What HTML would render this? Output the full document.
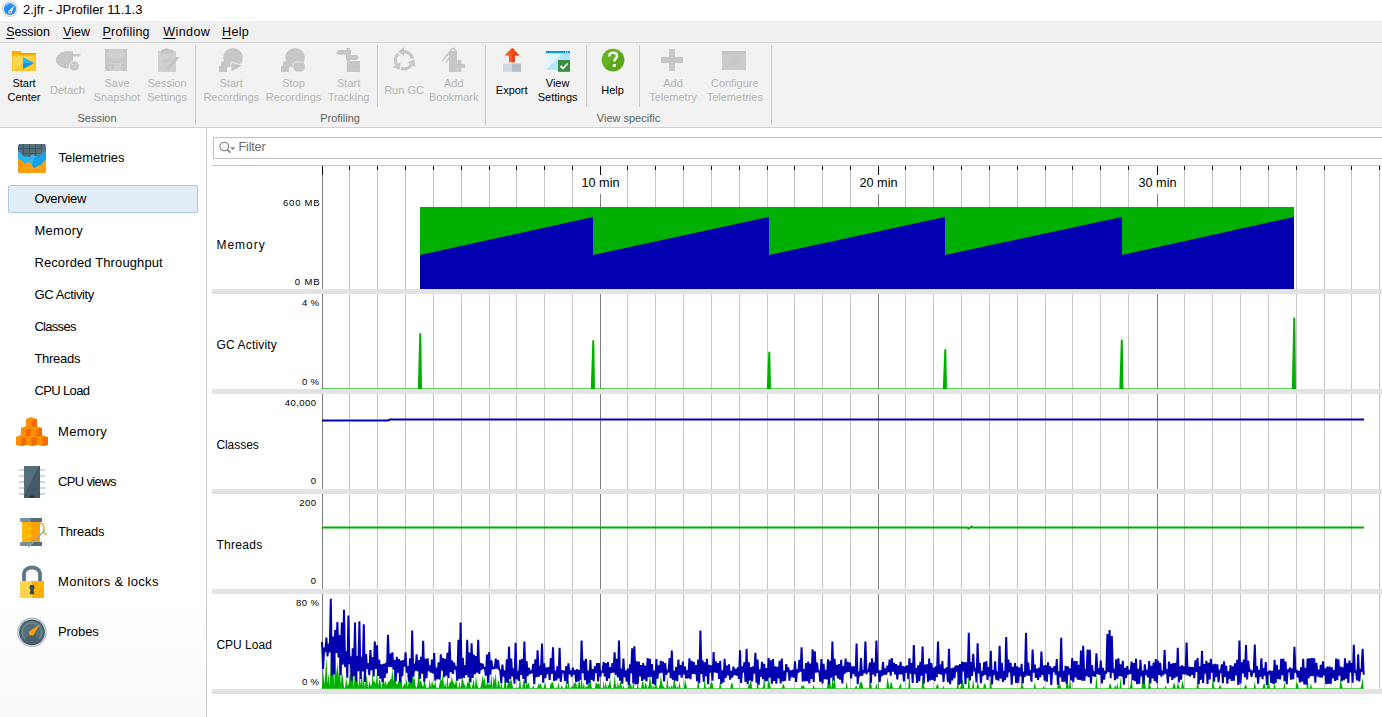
<!DOCTYPE html>
<html><head><meta charset="utf-8"><style>
html,body{margin:0;padding:0;}
body{width:1382px;height:717px;position:relative;overflow:hidden;background:#fff;font-family:"Liberation Sans", sans-serif;}
.t{position:absolute;white-space:nowrap;line-height:1;}
svg{display:block}
</style></head><body>
<div style="position:absolute;left:0;top:0;width:1382px;height:21px;background:#fff"></div>
<svg style="position:absolute;left:0;top:0" width="20" height="18" viewBox="0 0 20 18">
<circle cx="9.9" cy="9" r="7.6" fill="#f4f4f4" stroke="#d6d6d6" stroke-width="1.2"/>
<circle cx="9.9" cy="9" r="6.1" fill="#1e8cf5"/>
<path d="M5.5 7 A5 5 0 0 1 13 4.6" stroke="#6fb8ff" stroke-width="1" fill="none"/>
<path d="M14.4 5.2 L11.4 12.6 L8.4 11.4 Z" fill="#fff"/>
<circle cx="9.9" cy="11.9" r="1.7" fill="#fff"/>
<rect x="9.2" y="11" width="1.6" height="1.6" fill="#f4511e"/>
</svg>
<div class="t" style="left:23.00px;top:3.00px;font-size:13px;color:#000;letter-spacing:-0.013px;">2.jfr - JProfiler 11.1.3</div>
<div style="position:absolute;left:0;top:21px;width:1382px;height:21px;background:#f0f0f0"></div>
<div style="position:absolute;left:0;top:42px;width:1382px;height:1px;background:#d5d5d5"></div>
<div class="t" style="left:6.20px;top:26.42px;font-size:12.5px;color:#000;letter-spacing:-0.133px;text-underline-offset:1.5px"><u>S</u>ession</div>
<div class="t" style="left:63.00px;top:26.42px;font-size:12.5px;color:#000;letter-spacing:0.033px;text-underline-offset:1.5px"><u>V</u>iew</div>
<div class="t" style="left:102.50px;top:26.42px;font-size:12.5px;color:#000;letter-spacing:0.237px;text-underline-offset:1.5px"><u>P</u>rofiling</div>
<div class="t" style="left:163.30px;top:26.42px;font-size:12.5px;color:#000;letter-spacing:0.400px;text-underline-offset:1.5px"><u>W</u>indow</div>
<div class="t" style="left:222.00px;top:26.42px;font-size:12.5px;color:#000;letter-spacing:0.333px;text-underline-offset:1.5px"><u>H</u>elp</div>
<div style="position:absolute;left:0;top:43px;width:1382px;height:84px;background:#f2f2f2"></div>
<div style="position:absolute;left:0;top:127px;width:1382px;height:1px;background:#d0d0d0"></div>
<div style="position:absolute;left:195px;top:45px;width:1px;height:80px;background:#c8c8c8"></div>
<div style="position:absolute;left:485px;top:45px;width:1px;height:80px;background:#c8c8c8"></div>
<div style="position:absolute;left:771px;top:45px;width:1px;height:80px;background:#c8c8c8"></div>
<div style="position:absolute;left:377px;top:45px;width:1px;height:62px;background:#c8c8c8"></div>
<div style="position:absolute;left:586px;top:45px;width:1px;height:62px;background:#c8c8c8"></div>
<div style="position:absolute;left:639px;top:45px;width:1px;height:62px;background:#c8c8c8"></div>
<div class="t" style="left:77.45px;top:112.69px;font-size:11px;color:#606060;letter-spacing:0.000px;">Session</div>
<div class="t" style="left:320.15px;top:112.69px;font-size:11px;color:#606060;letter-spacing:0.000px;">Profiling</div>
<div class="t" style="left:596.80px;top:112.69px;font-size:11px;color:#606060;letter-spacing:0.000px;">View specific</div>
<div class="t" style="left:12.40px;top:77.69px;font-size:11px;color:#000;letter-spacing:0.000px;">Start</div>
<div class="t" style="left:7.50px;top:91.69px;font-size:11px;color:#000;letter-spacing:0.000px;">Center</div>
<div class="t" style="left:50.05px;top:84.69px;font-size:11px;color:#b4b4b4;letter-spacing:0.000px;">Detach</div>
<div class="t" style="left:104.45px;top:77.69px;font-size:11px;color:#b4b4b4;letter-spacing:0.000px;">Save</div>
<div class="t" style="left:93.75px;top:91.69px;font-size:11px;color:#b4b4b4;letter-spacing:0.000px;">Snapshot</div>
<div class="t" style="left:147.45px;top:77.69px;font-size:11px;color:#b4b4b4;letter-spacing:0.000px;">Session</div>
<div class="t" style="left:147.15px;top:91.69px;font-size:11px;color:#b4b4b4;letter-spacing:0.000px;">Settings</div>
<div class="t" style="left:219.60px;top:77.69px;font-size:11px;color:#b4b4b4;letter-spacing:0.000px;">Start</div>
<div class="t" style="left:203.40px;top:91.69px;font-size:11px;color:#b4b4b4;letter-spacing:0.000px;">Recordings</div>
<div class="t" style="left:282.20px;top:77.69px;font-size:11px;color:#b4b4b4;letter-spacing:0.000px;">Stop</div>
<div class="t" style="left:265.70px;top:91.69px;font-size:11px;color:#b4b4b4;letter-spacing:0.000px;">Recordings</div>
<div class="t" style="left:337.00px;top:77.69px;font-size:11px;color:#b4b4b4;letter-spacing:0.000px;">Start</div>
<div class="t" style="left:327.70px;top:91.69px;font-size:11px;color:#b4b4b4;letter-spacing:0.000px;">Tracking</div>
<div class="t" style="left:384.15px;top:84.69px;font-size:11px;color:#b4b4b4;letter-spacing:0.000px;">Run GC</div>
<div class="t" style="left:444.00px;top:77.69px;font-size:11px;color:#b4b4b4;letter-spacing:0.000px;">Add</div>
<div class="t" style="left:429.00px;top:91.69px;font-size:11px;color:#b4b4b4;letter-spacing:0.000px;">Bookmark</div>
<div class="t" style="left:495.80px;top:84.69px;font-size:11px;color:#000;letter-spacing:0.000px;">Export</div>
<div class="t" style="left:545.75px;top:77.69px;font-size:11px;color:#000;letter-spacing:0.000px;">View</div>
<div class="t" style="left:537.75px;top:91.69px;font-size:11px;color:#000;letter-spacing:0.000px;">Settings</div>
<div class="t" style="left:601.30px;top:84.69px;font-size:11px;color:#000;letter-spacing:0.000px;">Help</div>
<div class="t" style="left:663.20px;top:77.69px;font-size:11px;color:#b4b4b4;letter-spacing:0.000px;">Add</div>
<div class="t" style="left:649.15px;top:91.69px;font-size:11px;color:#b4b4b4;letter-spacing:0.000px;">Telemetry</div>
<div class="t" style="left:710.95px;top:77.69px;font-size:11px;color:#b4b4b4;letter-spacing:0.000px;">Configure</div>
<div class="t" style="left:706.70px;top:91.69px;font-size:11px;color:#b4b4b4;letter-spacing:0.000px;">Telemetries</div>
<svg style="position:absolute;left:0;top:43px" width="780" height="32" viewBox="0 43 780 32">
<!-- start center folder -->
<path d="M12 51 H20.5 L22 53 H36 V71 H12 Z" fill="#f0a800"/>
<rect x="12.5" y="51.5" width="8" height="4" fill="#ffb300"/>
<rect x="12.5" y="55.5" width="23" height="15" fill="#ffd54f"/>
<path d="M12.5 70.5 L35.5 55.5 V70.5 Z" fill="#ffca28"/>
<path d="M23 57 L34 63 L23 69 Z" fill="#29b6f6"/>
<path d="M23 63 L34 63 L23 69 Z" fill="#0897e0"/>
<!-- detach plug -->
<path d="M56 58 L57.5 55.5 L61 52.5 L66.5 51 L73 51.5 V54 H79.5 Q80.5 54 80.5 55.2 Q80.5 56.5 79.5 56.5 H73 V62 L70 67 L66.5 68.7 L61 67 L57.5 64 L56 62 Z" fill="#c6c6c6"/>
<rect x="66" y="51" width="0.8" height="18" fill="#cbcbcb"/>
<circle cx="74.3" cy="66" r="5" fill="#c6c6c6" stroke="#f2f2f2" stroke-width="0.8"/>
<path d="M72 63.7 L76.6 68.3 M76.6 63.7 L72 68.3" stroke="#d2d2d2" stroke-width="1.5"/>
<!-- floppy -->
<path d="M105 49 H127 V71 H106 L105 70 Z" fill="#c6c6c6"/>
<rect x="108" y="49.5" width="16" height="8.5" fill="#cfcfcf"/>
<rect x="108" y="58" width="16" height="3.5" fill="#cacaca"/>
<rect x="110" y="63" width="12" height="8" fill="#d0d0d0"/>
<rect x="111.3" y="64.3" width="2.2" height="5" fill="#c2c2c2"/>
<!-- clipboard -->
<rect x="158" y="51" width="18" height="21" fill="#cfcfcf"/>
<path d="M161 53.5 V50 L164 49 Q166.5 47.5 169 49 L173 50 V53.5 Z" fill="#c4c4c4"/>
<path d="M163 59.5 L166 62.5 L170 58" stroke="#c6c6c6" stroke-width="1.5" fill="none"/>
<path d="M165.5 68.5 L176.5 57 L179.5 57.5 L168 70 Z" fill="#c4c4c4"/>
<!-- start recordings -->
<circle cx="233" cy="57.7" r="9.8" fill="#c6c6c6"/>
<path d="M233.0 57.7 L233.0 49.2 M233.0 57.7 L224.9 55.1 M233.0 57.7 L228.0 64.6 M233.0 57.7 L238.0 64.6 M233.0 57.7 L241.1 55.1" stroke="#cbcbcb" stroke-width="0.8"/>
<rect x="221" y="61.5" width="7" height="6" fill="#c6c6c6"/>
<rect x="219" y="66" width="8" height="6" fill="#c6c6c6"/>
<path d="M231 62 L243 65.5 L231 72 Z" fill="#c6c6c6" stroke="#f2f2f2" stroke-width="0.8"/>
<!-- stop recordings -->
<circle cx="295" cy="57.7" r="9.8" fill="#c6c6c6"/>
<path d="M295.0 57.7 L295.0 49.2 M295.0 57.7 L286.9 55.1 M295.0 57.7 L290.0 64.6 M295.0 57.7 L300.0 64.6 M295.0 57.7 L303.1 55.1" stroke="#cbcbcb" stroke-width="0.8"/>
<rect x="283" y="61.5" width="7" height="6" fill="#c6c6c6"/>
<rect x="281" y="66" width="8" height="6" fill="#c6c6c6"/>
<path d="M295 62 H303 L305 64 V69 L302 72 H296 L293 69 V64 Z" fill="#c6c6c6" stroke="#f2f2f2" stroke-width="0.8"/>
<path d="M295.5 66.5 H303.5" stroke="#d0d0d0" stroke-width="1.2" stroke-dasharray="1.2 0.6"/>
<!-- start tracking -->
<rect x="346.8" y="48" width="3.2" height="24" fill="#c6c6c6"/>
<path d="M336 52.4 L338.4 50 H351 V54.8 H338.4 Z" fill="#c6c6c6"/>
<path d="M346 55 H356.6 L359 57.4 L356.6 59.9 H346 Z" fill="#c6c6c6"/>
<rect x="347" y="61" width="13" height="11" fill="#c6c6c6"/>
<circle cx="354.3" cy="66.5" r="3.3" fill="none" stroke="#cdcdcd" stroke-width="1"/>
<!-- run gc -->
<path d="M412.47 58.81 A8.6 8.6 0 0 0 404.00 51.70" fill="none" stroke="#c6c6c6" stroke-width="3.4"/>
<path d="M404.00 47.10 L398.00 51.70 L404.00 56.30 Z" fill="#c6c6c6"/>
<path d="M398.47 53.71 A8.6 8.6 0 0 0 396.55 64.60" fill="none" stroke="#c6c6c6" stroke-width="3.4"/>
<path d="M392.57 66.90 L399.55 69.80 L400.54 62.30 Z" fill="#c6c6c6"/>
<path d="M401.06 68.38 A8.6 8.6 0 0 0 411.45 64.60" fill="none" stroke="#c6c6c6" stroke-width="3.4"/>
<path d="M415.43 66.90 L414.45 59.40 L407.46 62.30 Z" fill="#c6c6c6"/>
<!-- add bookmark -->
<rect x="449" y="51" width="8" height="21" fill="#c6c6c6"/>
<path d="M450 57 C450 51 451 48.5 453 48.5 H454.5 L456 51" fill="none" stroke="#c6c6c6" stroke-width="1.5"/>
<path d="M450.5 52 C447 54 445 58 442 61.5" fill="none" stroke="#c6c6c6" stroke-width="1.5"/>
<path d="M451.5 54 C450 57 447 60 446 63" fill="none" stroke="#c6c6c6" stroke-width="1.4"/>
<rect x="457.5" y="60" width="3.8" height="12" fill="#c6c6c6"/>
<rect x="453" y="64" width="12" height="3.8" fill="#c6c6c6"/>

<!-- export -->
<path d="M512 47.8 L519.5 55.5 H515 V62.2 H509 V55.5 H504.5 Z" fill="#ff5722"/>
<path d="M512 47.8 L519.5 55.5 H515 V62.2 H512 Z" fill="#e64a19"/>
<rect x="503" y="63.5" width="9" height="8.3" fill="#cfd8dc"/>
<rect x="512" y="63.5" width="9" height="8.3" fill="#b0bec5"/>
<!-- view settings -->
<rect x="546" y="51" width="24" height="19" fill="#e1f5fe"/>
<path d="M546 70 L563 53 H570 V70 Z" fill="#b3e5fc"/>
<rect x="546" y="51" width="24" height="2.2" fill="#039be5"/>
<rect x="565" y="51.6" width="1" height="1" fill="#fff"/><rect x="567" y="51.6" width="1" height="1" fill="#fff"/>
<rect x="558" y="60" width="12" height="11.8" fill="#388e3c"/>
<path d="M560.5 66 L563 68.5 L567.5 63.5" stroke="#fff" stroke-width="1.8" fill="none"/>
<!-- help -->
<circle cx="613" cy="60.1" r="11.3" fill="#64b320"/>
<path d="M605 68 A11.3 11.3 0 0 0 621 52 Z" fill="#4f9a14" opacity="0.5"/>
<path d="M609.3 56.5 C609.3 53.8 611 52.6 613.2 52.6 C615.5 52.6 617 54 617 56 C617 58.5 614.3 58.7 614.3 61.5" stroke="#fff" stroke-width="2.4" fill="none"/>
<rect x="612.8" y="64" width="3" height="3" fill="#fff"/>
<!-- add telemetry -->
<rect x="669" y="49" width="6" height="22" fill="#c6c6c6"/>
<rect x="661" y="57" width="22" height="6" fill="#c6c6c6"/>
<!-- configure telemetries -->
<rect x="722" y="51" width="24" height="19" fill="#cccccc"/>
<rect x="722" y="51" width="24" height="3" fill="#c4c4c4"/>
<circle cx="734" cy="61" r="4.5" fill="#c8c8c8"/>
</svg>
<div style="position:absolute;left:0;top:128px;width:206px;height:589px;background:linear-gradient(to bottom,#fff 0,#fff 470px,#f9f9f9 589px)"></div>
<div style="position:absolute;left:206px;top:128px;width:1px;height:589px;background:#c8c8c8"></div>
<div style="position:absolute;left:207px;top:128px;width:1175px;height:589px;background:#fff"></div>
<div class="t" style="left:58.60px;top:151.20px;font-size:13px;color:#000;letter-spacing:-0.060px;">Telemetries</div>
<div style="position:absolute;left:8px;top:185px;width:188px;height:26px;background:#e2ecf6;border:1px solid #a9c9e6;border-radius:2px"></div>
<div class="t" style="left:34.40px;top:192.00px;font-size:13px;color:#000;letter-spacing:-0.329px;">Overview</div>
<div class="t" style="left:34.40px;top:224.00px;font-size:13px;color:#000;letter-spacing:0.300px;">Memory</div>
<div class="t" style="left:34.40px;top:256.00px;font-size:13px;color:#000;letter-spacing:0.117px;">Recorded Throughput</div>
<div class="t" style="left:34.40px;top:288.00px;font-size:13px;color:#000;letter-spacing:-0.360px;">GC Activity</div>
<div class="t" style="left:34.40px;top:320.00px;font-size:13px;color:#000;letter-spacing:-0.700px;">Classes</div>
<div class="t" style="left:34.40px;top:352.00px;font-size:13px;color:#000;letter-spacing:-0.283px;">Threads</div>
<div class="t" style="left:34.40px;top:384.00px;font-size:13px;color:#000;letter-spacing:-0.629px;">CPU Load</div>
<div class="t" style="left:58.00px;top:425.00px;font-size:13px;color:#000;letter-spacing:0.380px;">Memory</div>
<div class="t" style="left:58.00px;top:475.00px;font-size:13px;color:#000;letter-spacing:-0.638px;">CPU views</div>
<div class="t" style="left:58.00px;top:525.00px;font-size:13px;color:#000;letter-spacing:-0.183px;">Threads</div>
<div class="t" style="left:58.00px;top:575.00px;font-size:13px;color:#000;letter-spacing:0.340px;">Monitors &amp; locks</div>
<div class="t" style="left:58.00px;top:625.00px;font-size:13px;color:#000;letter-spacing:-0.080px;">Probes</div>
<svg style="position:absolute;left:0;top:128px" width="60" height="540" viewBox="0 128 60 540">
<!-- telemetries -->
<defs><clipPath id="tc"><rect x="18" y="144" width="28" height="29" rx="1.8"/></clipPath></defs>
<g clip-path="url(#tc)">
<rect x="18" y="144" width="28" height="29" fill="#546e7a"/>
<g stroke="#3d5059" stroke-width="0.9" opacity="0.85">
<path d="M23.5 144 V160 M29.5 144 V160 M35.5 144 V160 M41.5 144 V160 M18 148.5 H46 M18 153.5 H46"/>
</g>
<path d="M18 152.5 L20 152 L23 155.5 L25 157 L27 156 L29 157.5 L31 155.5 L33 154.5 L35 156 L37 156.5 L40 155.5 L43 152.5 L46 153 V173 H18 Z" fill="#29b6f6"/>
<path d="M34 158 L37 156.5 L40 155.5 L43 152.5 L46 153 V173 H30 Z" fill="#039be5"/>
<path d="M18 159 L21 160 L23 162 L25 163.7 L27 162.5 L29 162 L31 164 L34 168.4 L36 167 L38 166 L41 165 L43 162 L46 159 V173 H18 Z" fill="#ff9800"/>
<path d="M18 173 L46 144 V173 Z" fill="#fff" opacity="0.08"/>
</g>
<!-- memory cubes -->
<g>
<path d="M26 419 L31 417 L37 419 V427 L31 429 L26 427 Z" fill="#ff8f00"/>
<path d="M31.5 420 L37 419 V427 L31.5 428.5 Z" fill="#ef6c00"/>
<path d="M21 428 L26 426 L31 428 V436 L26 438 L21 436 Z" fill="#ff8f00"/>
<path d="M26 429 L31 428 V436 L26 437.5 Z" fill="#ef6c00"/>
<path d="M31 428 L36 426 L42 428 V436 L36 438 L31 436 Z" fill="#ff8f00"/>
<path d="M36.5 429 L42 428 V436 L36.5 437.5 Z" fill="#ef6c00"/>
<path d="M16 437 L21 435 L26 437 V445 L21 446 L16 445 Z" fill="#ff8f00"/>
<path d="M21 438 L26 437 V445 L21 446 Z" fill="#ef6c00"/>
<path d="M26 437 L31 435 L37 437 V445 L31 446 L26 445 Z" fill="#ff8f00"/>
<path d="M31.5 438 L37 437 V445 L31.5 446 Z" fill="#ef6c00"/>
<path d="M37 437 L42 435 L48 437 V445 L42 446 L37 445 Z" fill="#ff8f00"/>
<path d="M42.5 438 L48 437 V445 L42.5 446 Z" fill="#ef6c00"/>
</g>
<!-- cpu chip -->
<g fill="#cfd8dc">
<rect x="19" y="469" width="5" height="2"/><rect x="19" y="475" width="5" height="2"/><rect x="19" y="481" width="5" height="2"/><rect x="19" y="487" width="5" height="2"/><rect x="19" y="493" width="5" height="2"/>
<rect x="40" y="469" width="5" height="2"/><rect x="40" y="475" width="5" height="2"/><rect x="40" y="481" width="5" height="2"/><rect x="40" y="487" width="5" height="2"/><rect x="40" y="493" width="5" height="2"/>
</g>
<rect x="24" y="466" width="16" height="32" fill="#455a64"/>
<path d="M24 466 H38.5 L24 496 Z" fill="#546e7a"/>
<path d="M29 497.5 A3 2 0 0 1 35 497.5 Z" fill="#263238"/>
<!-- threads spool -->
<rect x="22" y="522" width="18" height="20" fill="#ffb300"/>
<rect x="31" y="522" width="9" height="20" fill="#ffa000"/>
<g stroke="#ffca28" stroke-width="1.2" fill="none" opacity="0.8"><path d="M22 525 L31 528 L22 531 M22 533 L31 536 L22 539"/></g>
<rect x="20" y="518" width="22" height="4" rx="1" fill="#78909c"/>
<rect x="31" y="518" width="11" height="4" fill="#546e7a"/>
<rect x="20" y="542" width="22" height="4" rx="1" fill="#78909c"/>
<rect x="31" y="542" width="11" height="4" fill="#546e7a"/>
<path d="M40 523 C44 524 45 527 43.5 531 C43 533 45 534 47 534" stroke="#ffa000" stroke-width="1.3" fill="none"/>
<path d="M28.5 547 L45 530" stroke="#90a4ae" stroke-width="1.3"/>
<!-- lock -->
<path d="M24 581 V573.5 A8 6 0 0 1 40 573.5 V581" stroke="#5f7884" stroke-width="3.8" fill="none"/>
<rect x="20" y="581" width="24" height="17" fill="#ffd54f"/>
<rect x="32" y="581" width="12" height="17" fill="#ffb300"/>
<circle cx="32" cy="587.3" r="2.5" fill="#37474f"/>
<path d="M30.8 588 L29.6 594.3 H34.4 L33.2 588 Z" fill="#37474f"/>
<!-- probes -->
<circle cx="32" cy="632.3" r="14.8" fill="#aebcc3"/><circle cx="32" cy="632.3" r="13.6" fill="#dfe6e9"/>
<circle cx="32" cy="632.3" r="12.9" fill="#455a64"/>
<circle cx="32" cy="632.3" r="11.6" fill="#546e7a"/>
<path d="M25.21 639.09 A9.6 9.6 0 1 1 38.79 639.09" stroke="#6d8591" stroke-width="1.4" fill="none"/>
<path d="M32 632.3 L23.80 640.50 A11.6 11.6 0 0 0 40.20 640.50 Z" fill="#4a616b"/>
<path d="M30 631 L39.9 624.2 L33.5 634.5 Z" fill="#ffa000"/>
<circle cx="31.6" cy="633" r="2.6" fill="#ffa000"/>
</svg>
<div style="position:absolute;left:213px;top:137px;width:1175px;height:20px;border:1px solid #c2c2c2;background:#fff"></div>
<svg style="position:absolute;left:218px;top:140px" width="20" height="16" viewBox="0 0 20 16">
<circle cx="6.3" cy="6.5" r="4.3" fill="none" stroke="#76818a" stroke-width="1.1"/>
<path d="M9.3 9.6 L12.3 12.6" stroke="#76818a" stroke-width="1.5"/>
<path d="M12.2 7.2 H17.2 L14.7 10.1 Z" fill="#76818a"/>
</svg>
<div class="t" style="left:238.60px;top:141.42px;font-size:12.5px;color:#6d6d6d;letter-spacing:-0.160px;">Filter</div>
<svg style="position:absolute;left:0;top:0" width="1382" height="717" viewBox="0 0 1382 717">
<rect x="212" y="165" width="1170" height="1" fill="#c6c6c6"/>
<rect x="322" y="166" width="1" height="9" fill="#000"/>
<rect x="322" y="175" width="1" height="514" fill="#7f7f7f"/>
<rect x="349" y="166" width="1" height="4" fill="#000"/>
<rect x="349" y="170" width="1" height="519" fill="#c4c4c4"/>
<rect x="377" y="166" width="1" height="4" fill="#000"/>
<rect x="377" y="170" width="1" height="519" fill="#c4c4c4"/>
<rect x="405" y="166" width="1" height="4" fill="#000"/>
<rect x="405" y="170" width="1" height="519" fill="#c4c4c4"/>
<rect x="433" y="166" width="1" height="4" fill="#000"/>
<rect x="433" y="170" width="1" height="519" fill="#c4c4c4"/>
<rect x="461" y="166" width="1" height="4" fill="#000"/>
<rect x="461" y="170" width="1" height="519" fill="#c4c4c4"/>
<rect x="489" y="166" width="1" height="4" fill="#000"/>
<rect x="489" y="170" width="1" height="519" fill="#c4c4c4"/>
<rect x="516" y="166" width="1" height="4" fill="#000"/>
<rect x="516" y="170" width="1" height="519" fill="#c4c4c4"/>
<rect x="544" y="166" width="1" height="4" fill="#000"/>
<rect x="544" y="170" width="1" height="519" fill="#c4c4c4"/>
<rect x="572" y="166" width="1" height="4" fill="#000"/>
<rect x="572" y="170" width="1" height="519" fill="#c4c4c4"/>
<rect x="600" y="166" width="1" height="9" fill="#000"/>
<rect x="600" y="194" width="1" height="495" fill="#7f7f7f"/>
<rect x="627" y="166" width="1" height="4" fill="#000"/>
<rect x="627" y="170" width="1" height="519" fill="#c4c4c4"/>
<rect x="655" y="166" width="1" height="4" fill="#000"/>
<rect x="655" y="170" width="1" height="519" fill="#c4c4c4"/>
<rect x="683" y="166" width="1" height="4" fill="#000"/>
<rect x="683" y="170" width="1" height="519" fill="#c4c4c4"/>
<rect x="711" y="166" width="1" height="4" fill="#000"/>
<rect x="711" y="170" width="1" height="519" fill="#c4c4c4"/>
<rect x="739" y="166" width="1" height="4" fill="#000"/>
<rect x="739" y="170" width="1" height="519" fill="#c4c4c4"/>
<rect x="767" y="166" width="1" height="4" fill="#000"/>
<rect x="767" y="170" width="1" height="519" fill="#c4c4c4"/>
<rect x="794" y="166" width="1" height="4" fill="#000"/>
<rect x="794" y="170" width="1" height="519" fill="#c4c4c4"/>
<rect x="822" y="166" width="1" height="4" fill="#000"/>
<rect x="822" y="170" width="1" height="519" fill="#c4c4c4"/>
<rect x="850" y="166" width="1" height="4" fill="#000"/>
<rect x="850" y="170" width="1" height="519" fill="#c4c4c4"/>
<rect x="878" y="166" width="1" height="9" fill="#000"/>
<rect x="878" y="194" width="1" height="495" fill="#7f7f7f"/>
<rect x="905" y="166" width="1" height="4" fill="#000"/>
<rect x="905" y="170" width="1" height="519" fill="#c4c4c4"/>
<rect x="933" y="166" width="1" height="4" fill="#000"/>
<rect x="933" y="170" width="1" height="519" fill="#c4c4c4"/>
<rect x="961" y="166" width="1" height="4" fill="#000"/>
<rect x="961" y="170" width="1" height="519" fill="#c4c4c4"/>
<rect x="989" y="166" width="1" height="4" fill="#000"/>
<rect x="989" y="170" width="1" height="519" fill="#c4c4c4"/>
<rect x="1017" y="166" width="1" height="4" fill="#000"/>
<rect x="1017" y="170" width="1" height="519" fill="#c4c4c4"/>
<rect x="1045" y="166" width="1" height="4" fill="#000"/>
<rect x="1045" y="170" width="1" height="519" fill="#c4c4c4"/>
<rect x="1072" y="166" width="1" height="4" fill="#000"/>
<rect x="1072" y="170" width="1" height="519" fill="#c4c4c4"/>
<rect x="1100" y="166" width="1" height="4" fill="#000"/>
<rect x="1100" y="170" width="1" height="519" fill="#c4c4c4"/>
<rect x="1128" y="166" width="1" height="4" fill="#000"/>
<rect x="1128" y="170" width="1" height="519" fill="#c4c4c4"/>
<rect x="1157" y="166" width="1" height="9" fill="#000"/>
<rect x="1157" y="194" width="1" height="495" fill="#7f7f7f"/>
<rect x="1184" y="166" width="1" height="4" fill="#000"/>
<rect x="1184" y="170" width="1" height="519" fill="#c4c4c4"/>
<rect x="1212" y="166" width="1" height="4" fill="#000"/>
<rect x="1212" y="170" width="1" height="519" fill="#c4c4c4"/>
<rect x="1240" y="166" width="1" height="4" fill="#000"/>
<rect x="1240" y="170" width="1" height="519" fill="#c4c4c4"/>
<rect x="1268" y="166" width="1" height="4" fill="#000"/>
<rect x="1268" y="170" width="1" height="519" fill="#c4c4c4"/>
<rect x="1296" y="166" width="1" height="4" fill="#000"/>
<rect x="1296" y="170" width="1" height="519" fill="#c4c4c4"/>
<rect x="1324" y="166" width="1" height="4" fill="#000"/>
<rect x="1324" y="170" width="1" height="519" fill="#c4c4c4"/>
<rect x="1351" y="166" width="1" height="4" fill="#000"/>
<rect x="1351" y="170" width="1" height="519" fill="#c4c4c4"/>
<rect x="1379" y="166" width="1" height="4" fill="#000"/>
<rect x="1379" y="170" width="1" height="519" fill="#c4c4c4"/>
<rect x="420" y="207" width="874" height="82" fill="#00b000"/>
<path d="M420 255 L593 217 L593 255 L769 217 L769 255 L945 217 L945 255 L1122 217 L1122 255 L1294 217 L1294 289 L420 289 Z" fill="#0000b0"/>
<path d="M322 388.5 H1294" stroke="#00b000" stroke-width="1" opacity="0.6"/>
<path d="M418.8 389 L420.3 334 L421 389" stroke="#00b000" stroke-width="2" fill="#00b000" stroke-linejoin="round"/>
<path d="M591.8 389 L593.3 341 L594 389" stroke="#00b000" stroke-width="2" fill="#00b000" stroke-linejoin="round"/>
<path d="M767.8 389 L769.3 352.5 L770 389" stroke="#00b000" stroke-width="2" fill="#00b000" stroke-linejoin="round"/>
<path d="M943.8 389 L945.3 350 L946 389" stroke="#00b000" stroke-width="2" fill="#00b000" stroke-linejoin="round"/>
<path d="M1120.3 389 L1121.8 340.5 L1122.5 389" stroke="#00b000" stroke-width="2" fill="#00b000" stroke-linejoin="round"/>
<path d="M1292.8 389 L1294.3 318.5 L1295 389" stroke="#00b000" stroke-width="2" fill="#00b000" stroke-linejoin="round"/>
<path d="M322 420.5 H388 L390 419.5 H1364" stroke="#0000b0" stroke-width="2" fill="none"/>
<path d="M322 527.5 H967 L969 528.5 L971.5 526.5 L972.5 527.5 H1364" stroke="#00b000" stroke-width="2" fill="none"/>
<polygon points="322,688.5 322.0,686.2 323.1,668.8 324.2,684.5 325.3,673.2 326.4,656.8 327.5,683.8 328.6,673.0 329.7,685.9 330.8,656.7 331.9,674.1 333.0,656.3 334.1,687.8 335.2,654.7 336.3,674.4 337.4,661.7 338.5,678.0 339.6,650.3 340.7,685.4 341.8,673.0 342.9,676.8 344.0,687.4 345.1,687.6 346.2,676.9 347.3,685.4 348.4,685.1 349.5,677.4 350.6,672.3 351.7,680.1 352.8,667.6 353.9,688.5 355.0,665.2 356.1,681.2 357.2,675.2 358.3,687.5 359.4,676.1 360.5,685.2 361.6,666.6 362.7,686.6 363.8,675.1 364.9,688.2 366.0,675.7 367.1,678.0 368.2,688.5 369.3,680.4 370.4,685.3 371.5,685.7 372.6,672.9 373.7,682.2 374.8,680.9 375.9,684.2 377.0,670.1 378.1,686.3 379.2,679.8 380.3,680.5 381.4,687.9 382.5,682.7 383.6,675.7 384.7,685.2 385.8,680.3 386.9,685.7 388.0,681.7 389.1,681.7 390.2,679.5 391.3,679.0 392.4,668.4 393.5,682.0 394.6,669.8 395.7,681.2 396.8,684.4 397.9,683.8 399.0,678.2 400.1,681.4 401.2,667.5 402.3,688.0 403.4,685.9 404.5,683.2 405.6,685.8 406.7,679.0 407.8,687.5 408.9,679.4 410.0,671.8 411.1,679.8 412.2,667.0 413.3,679.8 414.4,677.0 415.5,685.8 416.6,688.2 417.7,682.1 418.8,666.9 419.9,682.8 421.0,679.7 422.1,685.1 423.2,687.1 424.3,680.4 425.4,683.7 426.5,687.8 427.6,688.5 428.7,687.1 429.8,679.1 430.9,687.8 432.0,680.2 433.1,685.1 434.2,685.5 435.3,680.5 436.4,688.5 437.5,687.2 438.6,688.5 439.7,682.7 440.8,678.8 441.9,680.6 443.0,672.9 444.1,687.5 445.2,681.9 446.3,688.5 447.4,674.5 448.5,687.8 449.6,682.2 450.7,682.3 451.8,675.9 452.9,681.7 454.0,683.0 455.1,685.2 456.2,677.3 457.3,686.2 458.4,688.5 459.5,681.2 460.6,688.5 461.7,681.4 462.8,677.5 463.9,683.4 465.0,685.3 466.1,688.5 467.2,681.8 468.3,683.5 469.4,672.7 470.5,686.5 471.6,688.5 472.7,684.1 473.8,678.2 474.9,688.5 476.0,674.7 477.1,684.2 478.2,687.3 479.3,688.5 480.4,687.6 481.5,682.7 482.6,675.3 483.7,680.9 484.8,677.1 485.9,686.3 487.0,683.1 488.1,683.8 489.2,684.9 490.3,684.8 491.4,673.5 492.5,688.5 493.6,676.0 494.7,680.7 495.8,672.8 496.9,688.5 498.0,680.8 499.1,681.1 500.2,688.5 501.3,681.4 502.4,688.5 503.5,688.5 504.6,680.5 505.7,682.1 506.8,688.5 507.9,682.2 509.0,680.2 510.1,681.7 511.2,678.1 512.3,684.3 513.4,688.5 514.5,688.5 515.6,688.5 516.7,687.2 517.8,688.5 518.9,687.1 520.0,676.5 521.1,688.5 522.2,688.5 523.3,681.6 524.4,679.2 525.5,688.5 526.6,679.3 527.7,685.5 528.8,681.7 529.9,688.5 531.0,688.5 532.1,687.9 533.2,685.1 534.3,688.3 535.4,688.5 536.5,688.3 537.6,686.8 538.7,683.3 539.8,684.9 540.9,683.0 542.0,688.5 543.1,688.5 544.2,686.1 545.3,682.5 546.4,688.5 547.5,688.5 548.6,688.5 549.7,688.5 550.8,682.5 551.9,683.6 553.0,680.9 554.1,688.4 555.2,688.5 556.3,687.0 557.4,688.5 558.5,681.8 559.6,688.5 560.7,688.5 561.8,684.4 562.9,688.5 564.0,688.5 565.1,688.5 566.2,681.5 567.3,688.3 568.4,679.7 569.5,688.5 570.6,688.5 571.7,686.2 572.8,686.9 573.9,683.2 575.0,683.2 576.1,681.7 577.2,688.5 578.3,684.3 579.4,678.1 580.5,688.5 581.6,674.4 582.7,688.5 583.8,682.6 584.9,688.5 586.0,686.1 587.1,687.4 588.2,684.1 589.3,682.0 590.4,676.2 591.5,686.7 592.6,688.5 593.7,688.5 594.8,688.5 595.9,681.7 597.0,683.9 598.1,684.2 599.2,682.7 600.3,688.5 601.4,688.5 602.5,688.5 603.6,680.9 604.7,688.5 605.8,681.2 606.9,688.5 608.0,686.3 609.1,684.3 610.2,677.9 611.3,688.4 612.4,688.5 613.5,687.1 614.6,674.2 615.7,684.0 616.8,688.1 617.9,681.9 619.0,687.8 620.1,681.6 621.2,682.6 622.3,688.5 623.4,685.2 624.5,688.5 625.6,688.5 626.7,688.5 627.8,688.1 628.9,684.3 630.0,683.7 631.1,684.6 632.2,688.5 633.3,681.4 634.4,688.5 635.5,688.5 636.6,688.5 637.7,682.6 638.8,688.5 639.9,688.5 641.0,688.5 642.1,682.1 643.2,680.9 644.3,688.5 645.4,681.9 646.5,684.7 647.6,688.5 648.7,685.7 649.8,674.6 650.9,681.4 652.0,688.5 653.1,685.1 654.2,688.5 655.3,682.5 656.4,684.7 657.5,688.0 658.6,688.5 659.7,684.8 660.8,674.9 661.9,682.3 663.0,685.4 664.1,687.3 665.2,688.5 666.3,687.6 667.4,676.0 668.5,688.5 669.6,685.9 670.7,688.5 671.8,684.5 672.9,688.5 674.0,674.9 675.1,681.7 676.2,688.5 677.3,685.9 678.4,688.5 679.5,681.3 680.6,688.5 681.7,688.5 682.8,688.5 683.9,688.5 685.0,678.9 686.1,683.8 687.2,688.5 688.3,688.5 689.4,688.5 690.5,688.5 691.6,688.5 692.7,688.5 693.8,688.5 694.9,688.5 696.0,688.5 697.1,688.5 698.2,674.3 699.3,688.5 700.4,688.5 701.5,688.5 702.6,688.5 703.7,688.5 704.8,677.0 705.9,688.5 707.0,688.5 708.1,686.9 709.2,688.5 710.3,684.0 711.4,681.8 712.5,683.3 713.6,688.5 714.7,688.5 715.8,688.5 716.9,688.5 718.0,688.5 719.1,688.3 720.2,679.9 721.3,688.5 722.4,688.5 723.5,688.5 724.6,688.5 725.7,688.5 726.8,688.5 727.9,688.5 729.0,688.5 730.1,688.5 731.2,683.4 732.3,682.6 733.4,688.5 734.5,688.5 735.6,688.5 736.7,688.5 737.8,688.5 738.9,688.5 740.0,688.5 741.1,688.5 742.2,688.5 743.3,688.5 744.4,688.5 745.5,688.5 746.6,688.5 747.7,688.5 748.8,684.5 749.9,684.0 751.0,677.6 752.1,688.5 753.2,688.5 754.3,688.5 755.4,688.5 756.5,688.5 757.6,675.7 758.7,688.5 759.8,688.5 760.9,688.5 762.0,688.5 763.1,686.5 764.2,677.1 765.3,688.5 766.4,688.5 767.5,688.5 768.6,678.7 769.7,682.2 770.8,688.5 771.9,688.5 773.0,688.5 774.1,688.5 775.2,688.5 776.3,688.5 777.4,688.5 778.5,688.5 779.6,688.5 780.7,688.5 781.8,688.5 782.9,683.8 784.0,685.1 785.1,688.5 786.2,688.5 787.3,688.5 788.4,688.5 789.5,688.5 790.6,688.5 791.7,688.5 792.8,688.5 793.9,688.5 795.0,688.5 796.1,688.5 797.2,688.5 798.3,688.5 799.4,688.5 800.5,688.5 801.6,685.8 802.7,686.2 803.8,685.1 804.9,688.5 806.0,688.5 807.1,688.5 808.2,688.5 809.3,688.5 810.4,688.5 811.5,688.5 812.6,688.5 813.7,684.5 814.8,688.5 815.9,688.5 817.0,688.5 818.1,688.5 819.2,688.5 820.3,688.5 821.4,688.5 822.5,688.5 823.6,688.5 824.7,688.5 825.8,688.5 826.9,688.5 828.0,677.7 829.1,681.4 830.2,682.2 831.3,688.5 832.4,677.4 833.5,684.3 834.6,676.1 835.7,688.5 836.8,688.5 837.9,688.5 839.0,688.5 840.1,688.5 841.2,688.5 842.3,688.5 843.4,688.5 844.5,688.5 845.6,688.5 846.7,681.4 847.8,688.5 848.9,688.5 850.0,688.5 851.1,688.5 852.2,688.5 853.3,688.5 854.4,688.5 855.5,686.8 856.6,685.7 857.7,688.5 858.8,688.5 859.9,682.2 861.0,682.2 862.1,682.3 863.2,688.5 864.3,688.5 865.4,688.5 866.5,688.5 867.6,688.5 868.7,688.5 869.8,677.7 870.9,680.8 872.0,688.5 873.1,688.5 874.2,688.5 875.3,688.5 876.4,683.2 877.5,688.5 878.6,688.5 879.7,688.5 880.8,688.5 881.9,688.5 883.0,688.5 884.1,688.5 885.2,688.5 886.3,688.5 887.4,676.8 888.5,682.8 889.6,688.5 890.7,682.6 891.8,682.4 892.9,688.5 894.0,688.5 895.1,688.5 896.2,688.5 897.3,688.5 898.4,688.5 899.5,685.9 900.6,682.9 901.7,688.5 902.8,688.5 903.9,688.5 905.0,688.5 906.1,688.5 907.2,688.5 908.3,688.1 909.4,673.2 910.5,688.5 911.6,688.5 912.7,688.5 913.8,688.5 914.9,688.5 916.0,688.5 917.1,688.5 918.2,688.5 919.3,688.5 920.4,688.5 921.5,688.5 922.6,676.8 923.7,684.2 924.8,688.5 925.9,688.5 927.0,688.5 928.1,688.5 929.2,688.5 930.3,688.5 931.4,688.5 932.5,688.5 933.6,688.5 934.7,688.5 935.8,688.5 936.9,684.5 938.0,684.5 939.1,688.5 940.2,688.5 941.3,688.5 942.4,688.5 943.5,685.8 944.6,688.5 945.7,688.5 946.8,688.5 947.9,688.5 949.0,688.5 950.1,688.5 951.2,688.5 952.3,688.5 953.4,688.5 954.5,688.5 955.6,688.5 956.7,688.4 957.8,676.4 958.9,688.5 960.0,688.5 961.1,684.4 962.2,677.9 963.3,681.7 964.4,688.5 965.5,688.5 966.6,688.5 967.7,688.5 968.8,673.6 969.9,687.5 971.0,688.5 972.1,688.1 973.2,678.7 974.3,688.5 975.4,688.5 976.5,688.5 977.6,680.6 978.7,686.3 979.8,688.5 980.9,688.5 982.0,688.5 983.1,688.1 984.2,683.5 985.3,684.0 986.4,688.5 987.5,688.5 988.6,688.5 989.7,688.5 990.8,678.6 991.9,688.5 993.0,688.5 994.1,688.5 995.2,688.5 996.3,688.5 997.4,688.5 998.5,688.5 999.6,688.5 1000.7,688.5 1001.8,688.5 1002.9,688.5 1004.0,688.5 1005.1,688.5 1006.2,688.5 1007.3,688.5 1008.4,688.5 1009.5,688.5 1010.6,688.5 1011.7,688.5 1012.8,688.5 1013.9,688.5 1015.0,688.5 1016.1,688.5 1017.2,688.5 1018.3,688.5 1019.4,688.5 1020.5,688.5 1021.6,680.1 1022.7,686.0 1023.8,688.5 1024.9,688.5 1026.0,688.5 1027.1,688.5 1028.2,688.5 1029.3,688.5 1030.4,688.5 1031.5,688.5 1032.6,688.5 1033.7,688.5 1034.8,682.2 1035.9,688.1 1037.0,688.5 1038.1,688.5 1039.2,688.5 1040.3,688.5 1041.4,688.5 1042.5,688.5 1043.6,685.7 1044.7,688.5 1045.8,688.5 1046.9,688.5 1048.0,688.5 1049.1,688.5 1050.2,688.5 1051.3,688.5 1052.4,688.5 1053.5,688.5 1054.6,688.5 1055.7,688.5 1056.8,688.5 1057.9,685.6 1059.0,679.7 1060.1,684.4 1061.2,688.5 1062.3,688.5 1063.4,688.5 1064.5,688.5 1065.6,688.5 1066.7,681.3 1067.8,681.0 1068.9,688.5 1070.0,675.9 1071.1,688.5 1072.2,688.5 1073.3,688.5 1074.4,688.5 1075.5,688.5 1076.6,688.5 1077.7,688.5 1078.8,688.5 1079.9,688.5 1081.0,688.5 1082.1,688.5 1083.2,688.5 1084.3,688.5 1085.4,688.5 1086.5,688.5 1087.6,688.5 1088.7,688.5 1089.8,688.5 1090.9,688.5 1092.0,688.5 1093.1,688.5 1094.2,688.5 1095.3,688.5 1096.4,675.0 1097.5,688.5 1098.6,688.5 1099.7,688.5 1100.8,688.5 1101.9,688.5 1103.0,688.5 1104.1,688.5 1105.2,688.5 1106.3,688.5 1107.4,688.5 1108.5,688.5 1109.6,683.6 1110.7,684.6 1111.8,688.5 1112.9,688.5 1114.0,688.5 1115.1,685.1 1116.2,688.5 1117.3,682.6 1118.4,688.5 1119.5,688.5 1120.6,676.7 1121.7,688.5 1122.8,688.5 1123.9,688.5 1125.0,688.5 1126.1,688.5 1127.2,688.5 1128.3,688.5 1129.4,688.5 1130.5,684.9 1131.6,675.7 1132.7,688.5 1133.8,688.5 1134.9,688.5 1136.0,688.5 1137.1,688.5 1138.2,688.5 1139.3,688.5 1140.4,688.5 1141.5,688.5 1142.6,676.1 1143.7,684.4 1144.8,680.3 1145.9,688.5 1147.0,688.5 1148.1,688.5 1149.2,674.5 1150.3,686.3 1151.4,688.5 1152.5,688.5 1153.6,688.5 1154.7,688.5 1155.8,688.5 1156.9,688.5 1158.0,688.5 1159.1,688.5 1160.2,688.5 1161.3,688.5 1162.4,688.5 1163.5,688.5 1164.6,688.5 1165.7,685.6 1166.8,688.5 1167.9,688.5 1169.0,688.5 1170.1,688.5 1171.2,688.5 1172.3,688.5 1173.4,684.3 1174.5,682.8 1175.6,688.5 1176.7,688.5 1177.8,682.0 1178.9,686.1 1180.0,688.5 1181.1,688.5 1182.2,679.7 1183.3,684.2 1184.4,688.5 1185.5,688.5 1186.6,688.5 1187.7,688.5 1188.8,688.5 1189.9,688.5 1191.0,688.5 1192.1,688.5 1193.2,688.5 1194.3,688.5 1195.4,688.5 1196.5,688.5 1197.6,677.0 1198.7,687.3 1199.8,688.5 1200.9,688.5 1202.0,688.5 1203.1,688.5 1204.2,688.5 1205.3,688.5 1206.4,688.5 1207.5,688.5 1208.6,688.5 1209.7,688.5 1210.8,688.5 1211.9,688.5 1213.0,676.1 1214.1,686.8 1215.2,688.5 1216.3,688.5 1217.4,688.5 1218.5,688.5 1219.6,685.7 1220.7,685.6 1221.8,688.5 1222.9,688.5 1224.0,688.5 1225.1,688.5 1226.2,688.5 1227.3,688.5 1228.4,688.5 1229.5,688.5 1230.6,688.5 1231.7,688.5 1232.8,688.5 1233.9,688.5 1235.0,688.5 1236.1,688.5 1237.2,688.5 1238.3,688.5 1239.4,688.5 1240.5,688.5 1241.6,688.5 1242.7,688.5 1243.8,688.5 1244.9,685.9 1246.0,684.1 1247.1,688.5 1248.2,688.5 1249.3,688.5 1250.4,688.5 1251.5,688.5 1252.6,688.5 1253.7,688.5 1254.8,681.1 1255.9,688.5 1257.0,688.5 1258.1,688.5 1259.2,688.5 1260.3,688.5 1261.4,688.5 1262.5,688.5 1263.6,684.0 1264.7,683.7 1265.8,688.5 1266.9,688.5 1268.0,676.3 1269.1,684.1 1270.2,688.5 1271.3,688.5 1272.4,688.5 1273.5,688.1 1274.6,682.8 1275.7,688.5 1276.8,688.5 1277.9,688.5 1279.0,688.5 1280.1,688.5 1281.2,688.5 1282.3,688.5 1283.4,688.5 1284.5,682.3 1285.6,688.5 1286.7,688.5 1287.8,688.5 1288.9,688.5 1290.0,688.5 1291.1,688.5 1292.2,688.5 1293.3,688.5 1294.4,688.5 1295.5,688.5 1296.6,681.6 1297.7,683.8 1298.8,688.5 1299.9,688.5 1301.0,688.5 1302.1,688.5 1303.2,688.5 1304.3,688.5 1305.4,688.5 1306.5,687.9 1307.6,675.5 1308.7,688.5 1309.8,688.5 1310.9,682.8 1312.0,688.5 1313.1,688.5 1314.2,688.5 1315.3,688.5 1316.4,688.5 1317.5,688.5 1318.6,688.5 1319.7,688.5 1320.8,688.5 1321.9,688.5 1323.0,688.5 1324.1,688.5 1325.2,688.5 1326.3,688.5 1327.4,688.5 1328.5,688.5 1329.6,688.5 1330.7,688.5 1331.8,688.5 1332.9,688.5 1334.0,688.5 1335.1,688.5 1336.2,688.5 1337.3,688.5 1338.4,688.5 1339.5,688.5 1340.6,677.3 1341.7,684.4 1342.8,688.5 1343.9,688.5 1345.0,688.5 1346.1,688.5 1347.2,688.5 1348.3,688.5 1349.4,688.5 1350.5,688.5 1351.6,688.5 1352.7,688.5 1353.8,688.5 1354.9,688.5 1356.0,688.5 1357.1,688.5 1358.2,688.5 1359.3,688.5 1360.4,688.5 1361.5,684.4 1362.6,677.6 1363.7,688.5 1364,688.5" fill="#00b000"/>
<path d="M322 688.5 H1364" stroke="#00b000" stroke-width="1" opacity="0.6"/>
<polyline points="322.0,642.0 323.1,669.0 324.2,647.5 325.3,652.1 326.4,637.5 327.5,656.5 328.6,643.5 329.7,652.4 330.8,598.7 331.9,675.5 333.0,636.6 334.1,674.4 335.2,630.1 336.3,652.9 337.4,622.1 338.5,657.4 339.6,635.0 340.7,675.3 341.8,622.5 342.9,664.6 344.0,609.7 345.1,667.1 346.2,651.4 347.3,677.8 348.4,615.5 349.5,664.2 350.6,656.3 351.7,680.6 352.8,648.3 353.9,676.2 355.0,622.4 356.1,681.8 357.2,656.0 358.3,671.3 359.4,621.3 360.5,679.0 361.6,656.7 362.7,671.5 363.8,624.2 364.9,682.0 366.0,654.0 367.1,668.9 368.2,663.3 369.3,675.1 370.4,650.0 371.5,670.2 372.6,657.3 373.7,676.5 374.8,641.5 375.9,668.9 377.0,645.2 378.1,675.9 379.2,659.8 380.3,678.7 381.4,664.4 382.5,682.3 383.6,663.8 384.7,677.9 385.8,662.9 386.9,673.4 388.0,634.9 389.1,667.0 390.2,653.6 391.3,667.2 392.4,652.2 393.5,669.7 394.6,660.1 395.7,681.4 396.8,656.8 397.9,672.7 399.0,659.0 400.1,682.3 401.2,660.6 402.3,676.3 403.4,660.0 404.5,666.5 405.6,652.3 406.7,672.7 407.8,666.0 408.9,681.6 410.0,658.2 411.1,682.7 412.2,630.5 413.3,676.8 414.4,663.6 415.5,671.0 416.6,654.4 417.7,671.3 418.8,660.0 419.9,679.0 421.0,656.7 422.1,673.8 423.2,640.8 424.3,682.2 425.4,658.8 426.5,678.1 427.6,658.3 428.7,671.1 429.8,665.4 430.9,672.6 432.0,659.7 433.1,673.3 434.2,653.1 435.3,680.7 436.4,667.7 437.5,679.2 438.6,662.3 439.7,679.4 440.8,654.4 441.9,670.6 443.0,658.1 444.1,677.2 445.2,658.9 446.3,675.8 447.4,652.9 448.5,678.1 449.6,642.0 450.7,672.2 451.8,660.3 452.9,673.9 454.0,662.5 455.1,669.5 456.2,666.0 457.3,680.7 458.4,639.7 459.5,678.9 460.6,622.4 461.7,678.6 462.8,657.7 463.9,677.8 465.0,665.3 466.1,674.9 467.2,639.8 468.3,677.2 469.4,652.5 470.5,682.2 471.6,643.2 472.7,677.9 473.8,654.5 474.9,674.2 476.0,656.1 477.1,672.6 478.2,639.8 479.3,673.9 480.4,662.8 481.5,669.9 482.6,663.7 483.7,668.4 484.8,667.6 485.9,675.5 487.0,654.6 488.1,683.0 489.2,652.1 490.3,674.6 491.4,660.3 492.5,669.1 493.6,667.0 494.7,668.8 495.8,658.5 496.9,668.6 498.0,660.1 499.1,669.3 500.2,670.4 501.3,683.1 502.4,664.6 503.5,676.6 504.6,670.3 505.7,682.7 506.8,659.2 507.9,682.6 509.0,646.7 510.1,679.3 511.2,658.6 512.3,676.5 513.4,668.2 514.5,683.6 515.6,642.7 516.7,679.3 517.8,670.9 518.9,681.0 520.0,659.8 521.1,675.0 522.2,658.9 523.3,679.0 524.4,641.5 525.5,683.1 526.6,661.1 527.7,676.0 528.8,667.8 529.9,673.8 531.0,670.7 532.1,673.1 533.2,663.9 534.3,684.1 535.4,659.4 536.5,677.2 537.6,650.3 538.7,676.8 539.8,665.6 540.9,674.8 542.0,643.5 543.1,682.8 544.2,663.4 545.3,678.1 546.4,667.7 547.5,674.2 548.6,667.2 549.7,679.9 550.8,658.1 551.9,674.0 553.0,647.4 554.1,681.0 555.2,670.5 556.3,680.5 557.4,666.0 558.5,678.5 559.6,647.9 560.7,681.8 561.8,670.5 562.9,672.5 564.0,670.9 565.1,680.8 566.2,666.2 567.3,683.6 568.4,663.3 569.5,673.9 570.6,670.3 571.7,676.7 572.8,667.7 573.9,674.4 575.0,670.1 576.1,681.8 577.2,669.2 578.3,681.3 579.4,670.2 580.5,679.7 581.6,640.6 582.7,673.1 583.8,660.5 584.9,680.2 586.0,658.8 587.1,684.4 588.2,670.5 589.3,682.8 590.4,660.1 591.5,679.8 592.6,669.0 593.7,681.1 594.8,666.4 595.9,672.9 597.0,663.1 598.1,681.5 599.2,663.1 600.3,676.6 601.4,671.0 602.5,672.5 603.6,662.0 604.7,676.3 605.8,663.2 606.9,680.9 608.0,662.0 609.1,678.5 610.2,667.0 611.3,672.8 612.4,663.2 613.5,672.7 614.6,652.4 615.7,674.9 616.8,658.7 617.9,677.5 619.0,640.6 620.1,680.8 621.2,668.5 622.3,683.7 623.4,658.5 624.5,677.1 625.6,670.4 626.7,681.7 627.8,668.5 628.9,684.9 630.0,664.3 631.1,673.2 632.2,648.2 633.3,683.5 634.4,646.4 635.5,684.5 636.6,661.2 637.7,684.2 638.8,661.6 639.9,676.5 641.0,665.0 642.1,681.0 643.2,663.1 644.3,679.4 645.4,665.7 646.5,681.4 647.6,658.1 648.7,677.2 649.8,658.8 650.9,676.7 652.0,664.1 653.1,684.0 654.2,670.7 655.3,684.8 656.4,659.0 657.5,678.6 658.6,665.4 659.7,673.4 660.8,660.8 661.9,672.7 663.0,661.6 664.1,681.5 665.2,663.2 666.3,674.8 667.4,670.1 668.5,672.2 669.6,658.1 670.7,678.2 671.8,650.5 672.9,679.8 674.0,670.8 675.1,680.7 676.2,666.8 677.3,681.2 678.4,659.6 679.5,675.0 680.6,665.0 681.7,677.8 682.8,661.6 683.9,674.3 685.0,666.6 686.1,678.5 687.2,670.4 688.3,678.3 689.4,658.2 690.5,679.1 691.6,660.9 692.7,673.8 693.8,662.2 694.9,674.1 696.0,665.0 697.1,681.1 698.2,659.5 699.3,683.3 700.4,630.5 701.5,673.9 702.6,660.3 703.7,681.8 704.8,662.2 705.9,676.1 707.0,658.9 708.1,684.2 709.2,664.8 710.3,672.5 711.4,665.3 712.5,680.7 713.6,652.0 714.7,672.5 715.8,661.3 716.9,672.8 718.0,663.1 719.1,678.9 720.2,660.8 721.3,683.9 722.4,670.4 723.5,682.4 724.6,658.7 725.7,677.8 726.8,665.7 727.9,675.3 729.0,664.4 730.1,679.7 731.2,670.8 732.3,677.5 733.4,666.7 734.5,675.0 735.6,668.8 736.7,675.5 737.8,667.4 738.9,679.0 740.0,650.4 741.1,682.9 742.2,666.2 743.3,672.3 744.4,662.0 745.5,681.9 746.6,648.8 747.7,684.3 748.8,662.2 749.9,680.4 751.0,667.1 752.1,681.4 753.2,666.3 754.3,673.7 755.4,652.7 756.5,682.8 757.6,659.6 758.7,684.7 759.8,669.2 760.9,676.7 762.0,661.7 763.1,679.3 764.2,663.9 765.3,681.4 766.4,668.2 767.5,680.8 768.6,658.0 769.7,677.8 770.8,660.3 771.9,683.6 773.0,659.0 774.1,680.9 775.2,666.3 776.3,683.8 777.4,666.8 778.5,678.3 779.6,660.7 780.7,683.5 781.8,658.5 782.9,681.3 784.0,670.9 785.1,680.8 786.2,664.1 787.3,671.9 788.4,667.4 789.5,680.7 790.6,670.4 791.7,677.1 792.8,669.9 793.9,677.5 795.0,661.4 796.1,681.9 797.2,669.3 798.3,672.8 799.4,659.9 800.5,671.6 801.6,647.3 802.7,681.5 803.8,669.2 804.9,681.3 806.0,663.0 807.1,681.3 808.2,661.6 809.3,683.5 810.4,663.6 811.5,679.0 812.6,649.3 813.7,682.0 814.8,651.2 815.9,672.6 817.0,662.7 818.1,672.1 819.2,670.5 820.3,681.8 821.4,659.1 822.5,683.4 823.6,663.7 824.7,679.2 825.8,669.9 826.9,679.5 828.0,659.3 829.1,684.3 830.2,660.8 831.3,677.7 832.4,641.5 833.5,680.8 834.6,658.8 835.7,675.4 836.8,664.8 837.9,678.3 839.0,664.1 840.1,679.8 841.2,659.8 842.3,683.4 843.4,666.1 844.5,673.9 845.6,658.6 846.7,672.4 847.8,661.8 848.9,672.0 850.0,662.5 851.1,678.4 852.2,666.4 853.3,673.9 854.4,666.4 855.5,676.5 856.6,643.5 857.7,684.2 858.8,671.5 859.9,676.3 861.0,658.1 862.1,675.8 863.2,670.3 864.3,673.1 865.4,641.5 866.5,674.1 867.6,669.8 868.7,671.9 869.8,662.5 870.9,682.9 872.0,658.4 873.1,674.3 874.2,662.5 875.3,676.5 876.4,640.6 877.5,673.0 878.6,670.1 879.7,681.9 880.8,670.4 881.9,676.1 883.0,662.1 884.1,674.8 885.2,668.4 886.3,674.6 887.4,665.7 888.5,672.0 889.6,659.6 890.7,675.8 891.8,658.1 892.9,671.5 894.0,662.8 895.1,674.4 896.2,664.1 897.3,679.5 898.4,665.6 899.5,674.3 900.6,661.8 901.7,674.3 902.8,666.0 903.9,681.4 905.0,666.5 906.1,672.6 907.2,665.4 908.3,679.2 909.4,658.2 910.5,673.7 911.6,663.1 912.7,683.0 913.8,645.0 914.9,674.1 916.0,668.0 917.1,682.9 918.2,665.4 919.3,681.2 920.4,661.7 921.5,675.7 922.6,646.5 923.7,683.6 924.8,664.5 925.9,673.5 927.0,664.4 928.1,681.9 929.2,658.6 930.3,680.4 931.4,663.0 932.5,679.8 933.6,667.6 934.7,681.0 935.8,666.4 936.9,677.1 938.0,641.6 939.1,673.9 940.2,664.6 941.3,674.7 942.4,661.0 943.5,682.0 944.6,668.7 945.7,673.5 946.8,667.4 947.9,682.3 949.0,648.7 950.1,684.3 951.2,668.4 952.3,680.5 953.4,667.6 954.5,678.2 955.6,665.6 956.7,671.6 957.8,665.4 958.9,684.6 960.0,664.0 961.1,683.6 962.2,661.5 963.3,671.5 964.4,662.2 965.5,684.2 966.6,662.0 967.7,678.0 968.8,632.7 969.9,680.5 971.0,662.1 972.1,675.8 973.2,653.8 974.3,671.5 975.4,667.7 976.5,682.4 977.6,643.4 978.7,673.4 979.8,662.9 980.9,683.2 982.0,671.0 983.1,675.7 984.2,662.2 985.3,674.8 986.4,661.2 987.5,679.9 988.6,667.1 989.7,676.5 990.8,650.8 991.9,684.5 993.0,670.1 994.1,675.0 995.2,661.4 996.3,679.8 997.4,671.3 998.5,680.6 999.6,645.9 1000.7,678.5 1001.8,662.7 1002.9,682.0 1004.0,670.8 1005.1,680.2 1006.2,637.0 1007.3,677.5 1008.4,659.6 1009.5,672.5 1010.6,662.9 1011.7,684.7 1012.8,666.9 1013.9,675.6 1015.0,663.0 1016.1,683.0 1017.2,666.2 1018.3,682.8 1019.4,667.6 1020.5,676.1 1021.6,663.8 1022.7,683.5 1023.8,671.5 1024.9,676.8 1026.0,632.9 1027.1,675.7 1028.2,662.5 1029.3,675.7 1030.4,670.1 1031.5,681.7 1032.6,649.5 1033.7,672.7 1034.8,664.6 1035.9,677.9 1037.0,668.7 1038.1,679.9 1039.2,667.6 1040.3,677.1 1041.4,651.6 1042.5,674.9 1043.6,665.6 1044.7,680.8 1045.8,665.1 1046.9,681.7 1048.0,662.3 1049.1,674.2 1050.2,666.2 1051.3,684.9 1052.4,667.7 1053.5,672.0 1054.6,666.2 1055.7,674.7 1056.8,659.1 1057.9,684.7 1059.0,671.3 1060.1,677.2 1061.2,637.8 1062.3,681.8 1063.4,670.9 1064.5,681.6 1065.6,665.8 1066.7,683.7 1067.8,666.4 1068.9,674.7 1070.0,668.3 1071.1,680.5 1072.2,658.0 1073.3,682.2 1074.4,661.1 1075.5,677.4 1076.6,661.1 1077.7,679.7 1078.8,664.7 1079.9,680.0 1081.0,650.6 1082.1,680.7 1083.2,645.9 1084.3,680.8 1085.4,669.0 1086.5,676.2 1087.6,649.5 1088.7,677.2 1089.8,649.9 1090.9,683.4 1092.0,665.2 1093.1,675.9 1094.2,671.4 1095.3,676.8 1096.4,653.3 1097.5,674.1 1098.6,668.2 1099.7,674.8 1100.8,660.6 1101.9,683.4 1103.0,667.9 1104.1,679.5 1105.2,670.9 1106.3,673.5 1107.4,634.0 1108.5,672.1 1109.6,630.0 1110.7,678.2 1111.8,636.0 1112.9,672.6 1114.0,668.9 1115.1,680.1 1116.2,659.3 1117.3,678.8 1118.4,658.3 1119.5,676.2 1120.6,664.3 1121.7,676.4 1122.8,660.8 1123.9,684.7 1125.0,667.9 1126.1,677.9 1127.2,666.0 1128.3,674.5 1129.4,670.1 1130.5,673.8 1131.6,661.5 1132.7,680.3 1133.8,663.0 1134.9,681.3 1136.0,658.7 1137.1,684.3 1138.2,668.8 1139.3,683.8 1140.4,659.7 1141.5,676.4 1142.6,670.5 1143.7,684.0 1144.8,664.3 1145.9,675.0 1147.0,669.9 1148.1,677.3 1149.2,661.1 1150.3,683.5 1151.4,665.8 1152.5,678.4 1153.6,662.6 1154.7,681.0 1155.8,659.1 1156.9,682.7 1158.0,660.9 1159.1,674.9 1160.2,662.9 1161.3,676.5 1162.4,671.0 1163.5,675.0 1164.6,650.0 1165.7,673.8 1166.8,669.3 1167.9,683.3 1169.0,661.6 1170.1,676.6 1171.2,663.9 1172.3,680.0 1173.4,663.0 1174.5,678.3 1175.6,662.7 1176.7,676.7 1177.8,647.7 1178.9,682.5 1180.0,666.4 1181.1,679.7 1182.2,665.3 1183.3,674.2 1184.4,666.7 1185.5,674.7 1186.6,642.5 1187.7,675.5 1188.8,666.5 1189.9,676.5 1191.0,667.0 1192.1,674.8 1193.2,667.2 1194.3,678.1 1195.4,660.4 1196.5,672.0 1197.6,658.0 1198.7,684.1 1199.8,666.4 1200.9,679.8 1202.0,651.0 1203.1,682.9 1204.2,664.1 1205.3,673.6 1206.4,660.9 1207.5,684.0 1208.6,662.8 1209.7,679.4 1210.8,658.8 1211.9,672.7 1213.0,664.2 1214.1,681.8 1215.2,663.8 1216.3,676.8 1217.4,664.3 1218.5,682.3 1219.6,670.0 1220.7,672.5 1221.8,664.3 1222.9,683.1 1224.0,661.4 1225.1,676.8 1226.2,665.8 1227.3,683.6 1228.4,671.3 1229.5,678.8 1230.6,665.2 1231.7,680.9 1232.8,666.3 1233.9,680.6 1235.0,663.2 1236.1,675.5 1237.2,659.7 1238.3,684.9 1239.4,640.6 1240.5,683.4 1241.6,662.1 1242.7,673.3 1243.8,659.6 1244.9,677.3 1246.0,645.0 1247.1,679.4 1248.2,660.8 1249.3,671.7 1250.4,669.4 1251.5,676.8 1252.6,670.7 1253.7,672.6 1254.8,644.5 1255.9,677.4 1257.0,666.0 1258.1,683.7 1259.2,669.8 1260.3,676.6 1261.4,658.3 1262.5,679.2 1263.6,668.1 1264.7,675.6 1265.8,662.0 1266.9,684.9 1268.0,671.5 1269.1,674.2 1270.2,670.5 1271.3,682.9 1272.4,670.9 1273.5,684.0 1274.6,659.9 1275.7,682.9 1276.8,664.8 1277.9,678.8 1279.0,669.9 1280.1,679.5 1281.2,658.8 1282.3,675.1 1283.4,658.7 1284.5,681.2 1285.6,661.6 1286.7,684.3 1287.8,669.3 1288.9,671.8 1290.0,667.6 1291.1,679.6 1292.2,668.6 1293.3,679.1 1294.4,646.9 1295.5,672.5 1296.6,669.7 1297.7,677.3 1298.8,670.9 1299.9,682.5 1301.0,667.4 1302.1,681.6 1303.2,658.8 1304.3,684.4 1305.4,667.8 1306.5,684.7 1307.6,658.6 1308.7,678.3 1309.8,658.3 1310.9,676.3 1312.0,658.0 1313.1,676.1 1314.2,658.4 1315.3,682.7 1316.4,662.8 1317.5,676.3 1318.6,669.7 1319.7,677.3 1320.8,664.9 1321.9,677.6 1323.0,661.4 1324.1,675.3 1325.2,668.3 1326.3,684.2 1327.4,666.6 1328.5,683.7 1329.6,666.6 1330.7,683.9 1331.8,667.3 1332.9,678.3 1334.0,670.0 1335.1,681.0 1336.2,658.6 1337.3,680.1 1338.4,659.3 1339.5,675.7 1340.6,666.5 1341.7,681.3 1342.8,667.3 1343.9,680.1 1345.0,658.4 1346.1,678.7 1347.2,663.3 1348.3,683.0 1349.4,660.6 1350.5,672.5 1351.6,663.0 1352.7,682.8 1353.8,644.7 1354.9,672.8 1356.0,670.4 1357.1,680.4 1358.2,654.4 1359.3,681.4 1360.4,668.9 1361.5,671.9 1362.6,648.8 1363.7,674.8" fill="none" stroke="#0000b0" stroke-width="2" stroke-linejoin="bevel"/>
<rect x="212" y="289" width="1170" height="5" fill="#e3e3e3"/>
<rect x="212" y="389" width="1170" height="5" fill="#e3e3e3"/>
<rect x="212" y="489" width="1170" height="5" fill="#e3e3e3"/>
<rect x="212" y="589" width="1170" height="5" fill="#e3e3e3"/>
<rect x="212" y="689" width="1170" height="5" fill="#e3e3e3"/>
</svg>
<div class="t" style="left:581.50px;top:177.25px;font-size:12.7px;color:#000;letter-spacing:-0.020px;">10 min</div>
<div class="t" style="left:859.50px;top:177.25px;font-size:12.7px;color:#000;letter-spacing:-0.020px;">20 min</div>
<div class="t" style="left:1138.50px;top:177.25px;font-size:12.7px;color:#000;letter-spacing:-0.020px;">30 min</div>
<div class="t" style="left:283.00px;top:197.96px;font-size:9.5px;color:#000;letter-spacing:0.780px;">600 MB</div>
<div class="t" style="left:294.80px;top:276.96px;font-size:9.5px;color:#000;letter-spacing:0.867px;">0 MB</div>
<div class="t" style="left:302.10px;top:297.96px;font-size:9.5px;color:#000;letter-spacing:0.250px;">4 %</div>
<div class="t" style="left:302.00px;top:376.96px;font-size:9.5px;color:#000;letter-spacing:0.300px;">0 %</div>
<div class="t" style="left:284.80px;top:397.96px;font-size:9.5px;color:#000;letter-spacing:0.420px;">40,000</div>
<div class="t" style="left:310.70px;top:476.46px;font-size:9.5px;color:#000;letter-spacing:0.000px;">0</div>
<div class="t" style="left:299.20px;top:497.96px;font-size:9.5px;color:#000;letter-spacing:0.500px;">200</div>
<div class="t" style="left:310.70px;top:576.46px;font-size:9.5px;color:#000;letter-spacing:0.000px;">0</div>
<div class="t" style="left:296.00px;top:597.96px;font-size:9.5px;color:#000;letter-spacing:0.433px;">80 %</div>
<div class="t" style="left:302.00px;top:676.96px;font-size:9.5px;color:#000;letter-spacing:0.300px;">0 %</div>
<div class="t" style="left:216.40px;top:238.84px;font-size:12px;color:#000;letter-spacing:1.020px;">Memory</div>
<div class="t" style="left:216.40px;top:338.84px;font-size:12px;color:#000;letter-spacing:0.180px;">GC Activity</div>
<div class="t" style="left:216.40px;top:438.84px;font-size:12px;color:#000;letter-spacing:-0.050px;">Classes</div>
<div class="t" style="left:216.40px;top:538.84px;font-size:12px;color:#000;letter-spacing:0.317px;">Threads</div>
<div class="t" style="left:216.40px;top:638.84px;font-size:12px;color:#000;letter-spacing:0.014px;">CPU Load</div>
</body></html>
